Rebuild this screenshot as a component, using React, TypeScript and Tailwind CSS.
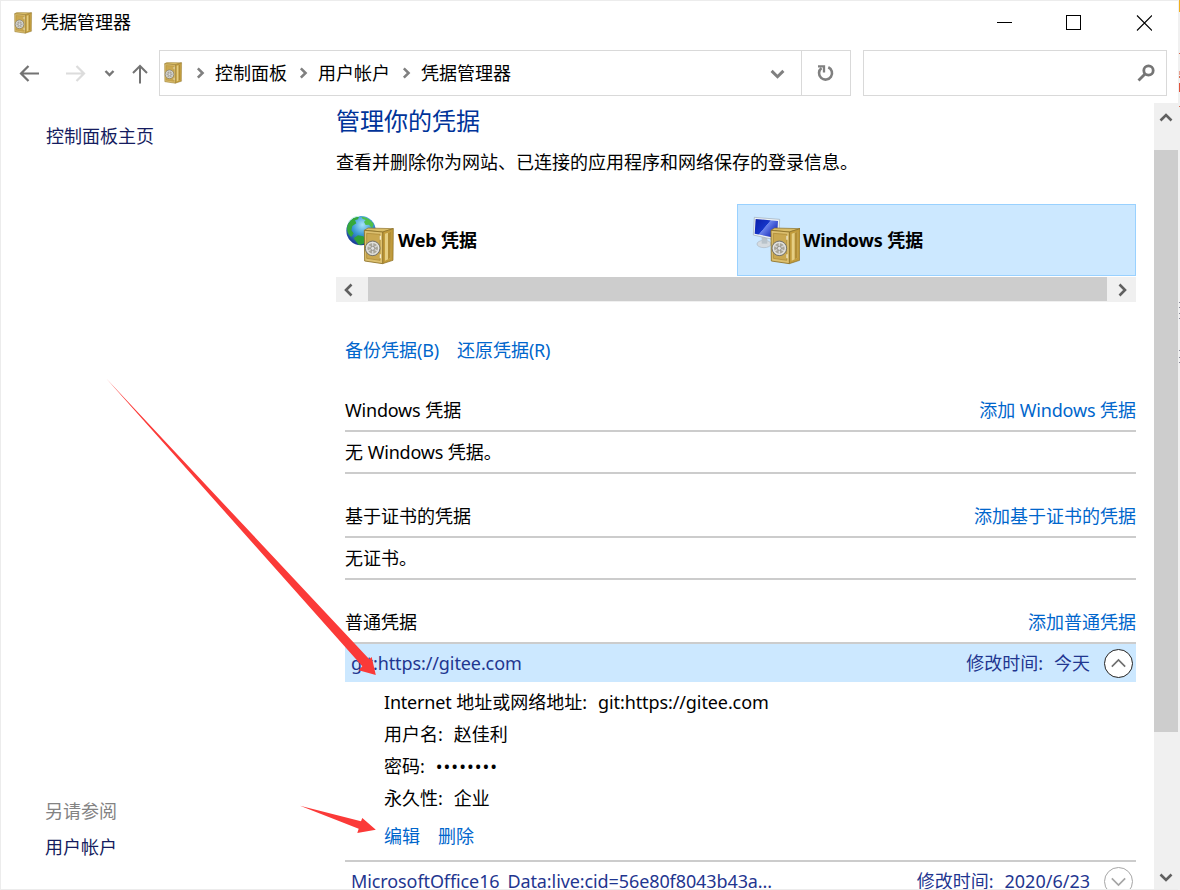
import type { ReactNode } from 'react';
import { clsx } from 'clsx';

const EDGE_MARKS = [
    { top: 0, height: 12, color: '#f0b020' },
    { top: 53, height: 1, color: '#d86a50' },
    { top: 71, height: 4, color: '#e8a090' },
    { top: 76, height: 2, color: '#d86a50' },
    { top: 83, height: 9, color: '#e0533c' },
    { top: 106, height: 1, color: '#d86a50' },
    { top: 302, height: 1, color: '#8a8a98' },
    { top: 307, height: 1, color: '#8a8a98' },
    { top: 313, height: 1, color: '#8a8a98' },
    { top: 318, height: 1, color: '#8a8a98' },
    { top: 350, height: 1, color: '#8a8a98' },
    { top: 357, height: 1, color: '#8a8a98' },
    { top: 362, height: 1, color: '#8a8a98' },
];

// Latin runs are set slightly tighter than the CJK text around them
function L({ children, className }: { children: ReactNode; className?: string }) {
    return <span className={clsx(className ?? 'tracking-[-0.2px]')}>{children}</span>;
}

function SafeShape() {
    return (
        <g>
            <path d="M55 46 66 39 142 41 110 51Z" fill="#d9bd68" stroke="#8a6d22" strokeWidth="2" />
            <path d="M110 51 142 41 141 136 110 146Z" fill="#c19b3b" stroke="#8a6d22" strokeWidth="2" />
            <path d="M117 56 135 50 134 129 117 137Z" fill="#e6cf83" />
            <path d="M126 53 135 50 134 129 126 133Z" fill="#b18d35" />
            <path d="M55 46 110 51 110 146 56 138Z" fill="#dcc070" stroke="#8a6d22" strokeWidth="2.5" />
            <path d="M62 55 102 58 102 136 62 130Z" fill="#caa850" stroke="#a88534" strokeWidth="2" />
            <path d="M103 62v12M103 118v12" stroke="#f2ead0" strokeWidth="4" />
            <circle cx="80" cy="100" r="22" fill="#a9a69a" stroke="#77756c" strokeWidth="3" />
            <circle cx="80" cy="100" r="18" fill="none" stroke="#e4e4e0" strokeWidth="4" />
            <path d="M80 84v32M66 92l28 16M94 92 66 108" stroke="#d6d6d6" strokeWidth="4" />
            <circle cx="80" cy="100" r="6" fill="#e2e2e2" stroke="#77756c" strokeWidth="2" />
        </g>
    );
}

function SafeIcon() {
    return (
        <svg width="20" height="22" viewBox="53 37 100 113" className="shrink-0">
            <path d="M140 134 152 124 136 142Z" fill="#d8d8d8" />
            <SafeShape />
        </svg>
    );
}

function WebIcon() {
    return (
        <svg width="48" height="50" viewBox="0 0 144 150" className="shrink-0">
            <defs>
                <radialGradient id="globe" cx="0.55" cy="0.3" r="0.75">
                    <stop offset="0" stopColor="#a6e2f8" />
                    <stop offset="0.45" stopColor="#3c9ad6" />
                    <stop offset="1" stopColor="#152a8c" />
                </radialGradient>
            </defs>
            <circle cx="45" cy="47" r="44" fill="url(#globe)" />
            <path d="M6 28C14 12 26 5 39 5l-3 8-9 3 4 9-12 8-3 13 7 9-7 11C4 58 0 42 6 28Z" fill="#35a83a" />
            <path d="M46 5c16 1 30 10 37 23l-5 12-9-11-10 1-5-9 5-6-9-3Z" fill="#4fc04a" />
            <path d="M23 70l13-9 16 3 8 9-8 14-14 3Z" fill="#2fa03a" />
            <path d="M8 20C16 9 26 4 40 4" fill="none" stroke="#c4f1e2" strokeWidth="3" />
            <SafeShape />
        </svg>
    );
}

function WindowsIcon() {
    return (
        <svg width="48" height="50" viewBox="0 0 144 150" className="shrink-0">
            <defs>
                <linearGradient id="screen" x1="0" y1="0" x2="1" y2="0.7">
                    <stop offset="0" stopColor="#0a1ea8" />
                    <stop offset="0.48" stopColor="#1535c8" />
                    <stop offset="0.5" stopColor="#6b84ec" />
                    <stop offset="1" stopColor="#0c20b4" />
                </linearGradient>
            </defs>
            <ellipse cx="36" cy="87" rx="21" ry="11" fill="#d5dbe0" stroke="#adb7c0" strokeWidth="2" />
            <path d="M29 66h17v20H29Z" fill="#b9c3ca" />
            <path d="M7 7 83 13 80 77 4 60Z" fill="#edf2f5" stroke="#9caab8" strokeWidth="2" />
            <path d="M11 12 78 18 75 70 8 56Z" fill="url(#screen)" />
            <g transform="translate(2 0)">
                <SafeShape />
            </g>
        </svg>
    );
}

type Direction = 'up' | 'down' | 'left' | 'right';

const CHEVRONS: Record<Direction, string> = {
    up: 'M1.5 9.5 7 4l5.5 5.5',
    down: 'M1.5 4.5 7 10l5.5-5.5',
    left: 'M9.5 1.5 4 7l5.5 5.5',
    right: 'M4.5 1.5 10 7l-5.5 5.5',
};

function Chevron({ dir, size = 14, className = 'stroke-[#606060]', width = 2.6 }: { dir: Direction; size?: number; className?: string; width?: number }) {
    return (
        <svg width={size} height={size} viewBox="0 0 14 14" fill="none" strokeWidth={width} className={clsx('shrink-0', className)}>
            <path d={CHEVRONS[dir]} />
        </svg>
    );
}

function TitleBar() {
    return (
        <div className="flex h-[43px] shrink-0 items-center pl-[13px]">
            <SafeIcon />
            <span className="ml-[7px] flex-1">凭据管理器</span>
            <svg width="156" height="16" viewBox="0 0 156 16" fill="none" stroke="#000" className="mr-[26px]" shapeRendering="crispEdges">
                <path d="M1 7.5h15" />
                <path d="M70.5.5h14v14h-14Z" />
                <path d="M141 .5l15 15M156 .5l-15 15" shapeRendering="auto" strokeWidth="1.1" />
            </svg>
        </div>
    );
}

function AddressBar() {
    return (
        <div className="mt-[6px] flex h-[46px] shrink-0 items-center">
            <svg width="158" height="46" viewBox="1 50 158 46" fill="none" strokeWidth="2.2" className="shrink-0">
                <path d="M39 73.500H21.500M28.500 66 21 73.500 28.500 81" stroke="#737373" />
                <path d="M66 73.500H83.500M76.500 66 84 73.500 76.500 81" stroke="#dcdcdc" />
                <path d="M105.500 71 109.500 75 113.500 71" stroke="#767676" strokeWidth="2.4" />
                <path d="M140 83.500V66M133 73 140 66 147 73" stroke="#737373" strokeWidth="2" />
            </svg>
            <div className="flex h-full w-[692px] items-center border border-[#d9d9d9] pl-[4px]">
                <SafeIcon />
                <Chevron dir="right" size={12} className="ml-[10px] stroke-[#808080]" width={3} />
                <span className="ml-[9px]">控制面板</span>
                <Chevron dir="right" size={12} className="ml-[10px] stroke-[#808080]" width={3} />
                <span className="ml-[9px]">用户帐户</span>
                <Chevron dir="right" size={12} className="ml-[10px] stroke-[#808080]" width={3} />
                <span className="ml-[9px] flex-1">凭据管理器</span>
                <Chevron dir="down" size={15} className="mr-[16px] stroke-[#808080]" width={2.8} />
                <div className="flex h-full w-[49px] items-center justify-center border-l border-[#d9d9d9]">
                    <svg width="18" height="18" viewBox="0 0 18 18" fill="none" stroke="#808080" strokeWidth="2.6">
                        <path d="M11.300 3.200A6.500 6.500 0 1 1 4.500 4" />
                        <path d="M1 2.300H7V8.500" strokeWidth="2.300" />
                    </svg>
                </div>
            </div>
            <div className="ml-[12px] flex h-full w-[304px] items-center justify-end border border-[#d9d9d9] pr-[11px]">
                <svg width="18" height="18" viewBox="0 0 18 18" fill="none" stroke="#757575">
                    <circle cx="11.500" cy="6.500" r="4.700" strokeWidth="2.800" />
                    <path d="M8 10 1.500 16.500" strokeWidth="2.800" />
                </svg>
            </div>
        </div>
    );
}

function Sidebar() {
    return (
        <div className="flex w-[335px] shrink-0 flex-col pl-[44px] text-[#151c60]">
            <span className="mt-[20px] pl-px">控制面板主页</span>
            <span className="mt-auto text-[#838383]">另请参阅</span>
            <span className="mt-[9px] mb-[28px]">用户帐户</span>
        </div>
    );
}

function VaultTiles() {
    return (
        <div className="mt-[28px]">
            <div className="flex h-[72px] font-bold">
                <div className="flex w-[401px] items-center pl-[10px]">
                    <WebIcon />
                    <span className="ml-[4px]"><L className="tracking-[-0.25px]">Web</L> 凭据</span>
                </div>
                <div className="flex w-[399px] items-center border border-[#99d1ff] bg-[#cce8ff] pl-[14px]">
                    <WindowsIcon />
                    <span className="ml-[3px]"><L className="tracking-[-0.25px]">Windows</L> 凭据</span>
                </div>
            </div>
            <div className="mt-px flex h-[25px] bg-[#f0f0f0]">
                <div className="flex w-8 items-center pl-[6px]">
                    <Chevron dir="left" />
                </div>
                <div className="h-6 flex-1 bg-[#cdcdcd]" />
                <div className="flex w-[29px] items-center pl-[8px]">
                    <Chevron dir="right" />
                </div>
            </div>
        </div>
    );
}

function SectionHeader({ title, action }: { title: ReactNode; action: ReactNode }) {
    return (
        <div className="flex h-[42px] items-center justify-between border-b-2 border-[#cccccc]">
            <span>{title}</span>
            <a className="text-[#0066cc]">{action}</a>
        </div>
    );
}

function EmptyRow({ children }: { children: ReactNode }) {
    return <div className="mb-[22px] flex h-[42px] items-center border-b-2 border-[#cccccc]">{children}</div>;
}

function CredentialRow({ name, modified, open }: { name: string; modified: string; open?: boolean }) {
    return (
        <div className={clsx('flex h-[38px] shrink-0 items-center pr-[3px] pl-[6px] text-[#1f3690]', open && 'bg-[#cce8ff]')}>
            <L className="flex-1 tracking-[-0.1px]">{name}</L>
            <span className="whitespace-pre">修改时间:</span>
            <span className="ml-[11px]">{modified}</span>
            <span
                className={clsx(
                    'ml-[14px] flex size-[29px] items-center justify-center rounded-full border-[1.5px] bg-white',
                    open ? 'border-[#222222]' : 'border-[#a6a6a6]',
                )}
            >
                <Chevron dir={open ? 'up' : 'down'} size={17} className={open ? 'stroke-[#707070]' : 'stroke-[#a6a6a6]'} width={1.4} />
            </span>
        </div>
    );
}

function Detail({ label, value }: { label: ReactNode; value: ReactNode }) {
    return (
        <div className="flex h-8 items-center">
            <span>{label}:</span>
            <span className="ml-[11px]">{value}</span>
        </div>
    );
}

function MainPanel() {
    return (
        <div className="w-[800px] shrink-0">
            <h1 className="mt-px h-[34px] text-[24px] leading-[34px] text-[#003399]">管理你的凭据</h1>
            <p className="mt-[11px]">查看并删除你为网站、已连接的应用程序和网络保存的登录信息。</p>
            <VaultTiles />
            <div className="pl-[9px]">
                <div className="mt-[35px] mb-[26px] flex gap-[18px] text-[#0066cc]">
                    <a>备份凭据<L>(B)</L></a>
                    <a>还原凭据<L>(R)</L></a>
                </div>
                <SectionHeader title={<><L>Windows</L> 凭据</>} action={<>添加 <L>Windows</L> 凭据</>} />
                <EmptyRow>
                    <span>无 <L>Windows</L> 凭据。</span>
                </EmptyRow>
                <SectionHeader title="基于证书的凭据" action="添加基于证书的凭据" />
                <EmptyRow>无证书。</EmptyRow>
                <SectionHeader title="普通凭据" action="添加普通凭据" />
                <CredentialRow name="git:https://gitee.com" modified="今天" open />
                <div className="mt-[4px] pl-[39px]">
                    <Detail label={<><L>Internet</L> 地址或网络地址</>} value={<L className="tracking-[-0.1px]">git:https://gitee.com</L>} />
                    <Detail label="用户名" value="赵佳利" />
                    <Detail label="密码" value={<span className="tracking-[1px]">••••••••</span>} />
                    <Detail label="永久性" value="企业" />
                    <div className="mt-[9px] flex gap-[18px] text-[#0066cc]">
                        <a>编辑</a>
                        <a>删除</a>
                    </div>
                </div>
                <div className="mt-[10px] border-t-2 border-[#cccccc]">
                    <CredentialRow name="MicrosoftOffice16_Data:live:cid=56e80f8043b43a..." modified="2020/6/23" />
                </div>
            </div>
        </div>
    );
}

function Scrollbar() {
    return (
        <div className="ml-auto flex w-6 shrink-0 flex-col items-center bg-[#f0f0f0]">
            <div className="flex h-[47px] items-start pt-[8px]">
                <Chevron dir="up" />
            </div>
            <div className="h-[582px] w-full bg-[#cdcdcd]" />
            <div className="mt-auto mb-[5px]">
                <Chevron dir="down" />
            </div>
        </div>
    );
}

function Annotations() {
    return (
        <svg width="1180" height="890" viewBox="0 0 1180 890" fill="#fb3a38" className="pointer-events-none absolute top-0 left-0">
            <path d="M106.700 379 369.300 659.300 371.700 657 375.800 675 358.700 670.200 362.300 666.300Z" />
            <path d="M300 805.800 361 821.300 362.300 818 375.800 829.800 357.300 833 358.700 828.700Z" />
        </svg>
    );
}

export default function App() {
    return (
        <div className="relative flex h-[890px] w-[1180px] overflow-hidden bg-[#f0f0f0] font-['Noto_Sans','Noto_Sans_CJK_SC',sans-serif] text-[18px] leading-[27px] text-black">
            <div className="flex w-[1178px] flex-col overflow-hidden border-t border-b border-l border-[#ececec] bg-white">
                <TitleBar />
                <AddressBar />
                <div className="mt-[7px] flex min-h-0 flex-1 overflow-hidden">
                    <Sidebar />
                    <MainPanel />
                    <Scrollbar />
                </div>
            </div>
            {/* Slivers of the window behind this one */}
            <div className="relative w-[2px]">
                {EDGE_MARKS.map(mark => (
                    <div key={mark.top} className="absolute right-0 w-px" style={{ top: mark.top, height: mark.height, background: mark.color }} />
                ))}
            </div>
            <Annotations />
        </div>
    );
}
